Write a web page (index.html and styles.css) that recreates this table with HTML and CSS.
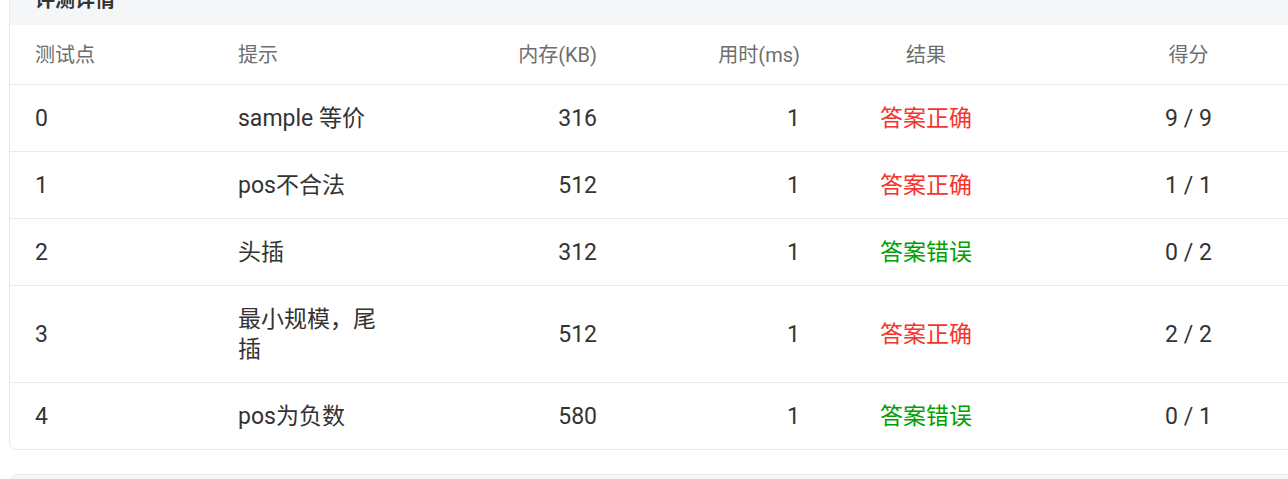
FILE: index.html
```html
<!DOCTYPE html>
<html lang="zh-CN">
<head>
<meta charset="utf-8">
<title>评测详情</title>
<link rel="stylesheet" href="styles.css">
</head>
<body>
<div class="page">
  <section class="card">
    <div class="card-head">评测详情</div>
    <table class="judge">
      <colgroup>
        <col class="c1"><col class="c2"><col class="c3"><col class="c4"><col class="c5"><col class="c6">
      </colgroup>
      <thead>
        <tr>
          <th class="left">测试点</th>
          <th class="left">提示</th>
          <th class="right">内存(KB)</th>
          <th class="right">用时(ms)</th>
          <th class="center">结果</th>
          <th class="center">得分</th>
        </tr>
      </thead>
      <tbody>
        <tr>
          <td class="left">0</td>
          <td class="left hint">sample 等价</td>
          <td class="right">316</td>
          <td class="right">1</td>
          <td class="center ok">答案正确</td>
          <td class="center">9 / 9</td>
        </tr>
        <tr>
          <td class="left">1</td>
          <td class="left hint">pos不合法</td>
          <td class="right">512</td>
          <td class="right">1</td>
          <td class="center ok">答案正确</td>
          <td class="center">1 / 1</td>
        </tr>
        <tr>
          <td class="left">2</td>
          <td class="left hint">头插</td>
          <td class="right">312</td>
          <td class="right">1</td>
          <td class="center wa">答案错误</td>
          <td class="center">0 / 2</td>
        </tr>
        <tr>
          <td class="left">3</td>
          <td class="left hint">最小规模，尾插</td>
          <td class="right">512</td>
          <td class="right">1</td>
          <td class="center ok">答案正确</td>
          <td class="center">2 / 2</td>
        </tr>
        <tr class="last">
          <td class="left">4</td>
          <td class="left hint">pos为负数</td>
          <td class="right">580</td>
          <td class="right">1</td>
          <td class="center wa">答案错误</td>
          <td class="center">0 / 1</td>
        </tr>
      </tbody>
    </table>
  </section>
  <section class="card next">
    <div class="card-head blank"></div>
  </section>
</div>
</body>
</html>
```

FILE: styles.css
```css
html, body {
  margin: 0;
  padding: 0;
  background: #ffffff;
  overflow: hidden;
}

body {
  font-family: Roboto, "Noto Sans CJK SC", sans-serif;
  color: #333333;
}

.page {
  margin-top: -32px;
  padding-left: 9px;
  width: 1400px;
  display: flex;
  flex-direction: column;
  gap: 24px;
}

.card {
  width: 1334px;
  border: 1px solid #ebebeb;
  border-radius: 8px;
  overflow: hidden;
  background: #ffffff;
}

.card-head {
  background: #f5f6f8;
  padding: 16px 25px 10px;
  font-size: 20px;
  line-height: 30px;
  font-weight: 700;
  color: #333333;
}

.card-head.blank {
  height: 60px;
}

.judge {
  width: 1334px;
  border-collapse: collapse;
  table-layout: fixed;
}

.c1, .c2, .c3, .c4 { width: 203px; }
.c5 { width: 208px; }
.c6 { width: 317px; }

.judge th {
  font-size: 20px;
  font-weight: 400;
  color: #6e6e6e;
  line-height: 30px;
  padding: 15px 22px 14px 25px;
  border-bottom: 1px solid #ebebeb;
}

.judge td {
  font-size: 23px;
  line-height: 30px;
  padding: 19px 22px 17px 25px;
  border-bottom: 1px solid #ebebeb;
  color: #333333;
}

.judge tr.last td {
  border-bottom: none;
}

.left { text-align: left; }
.right { text-align: right; }
.center { text-align: center; }

.judge th.center, .judge td.center {
  padding-left: 0;
  padding-right: 0;
}

.hint {
  word-break: break-all;
}

.judge td.ok { color: #f5342c; }
.judge td.wa { color: #00a000; }
```
